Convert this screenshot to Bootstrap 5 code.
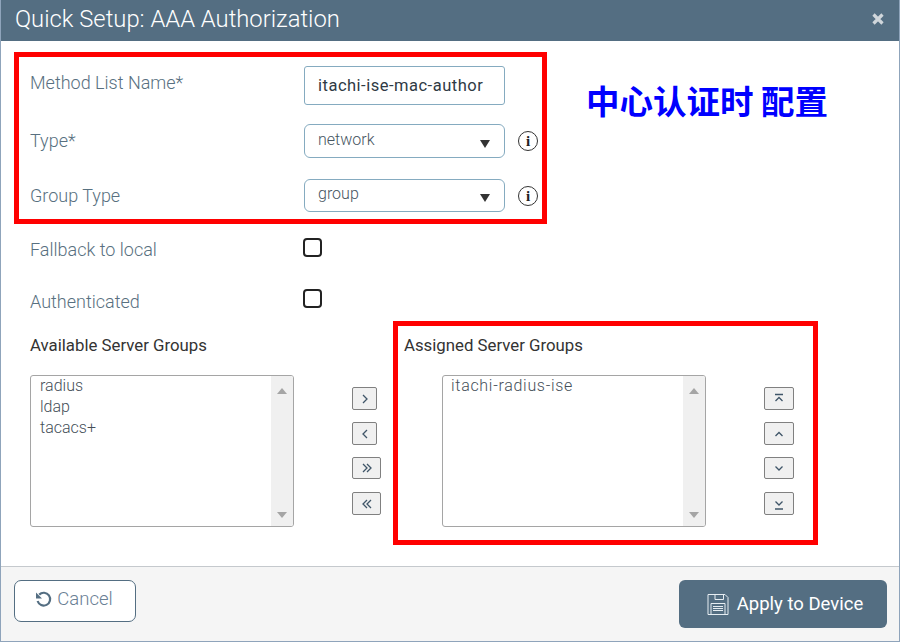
<!DOCTYPE html>
<html lang="en">
<head>
    <meta charset="UTF-8">
    <meta name="viewport" content="width=device-width, initial-scale=1.0">
    <title>Quick Setup: AAA Authorization</title>
    <link href="https://cdn.jsdelivr.net/npm/bootstrap@5.3.0/dist/css/bootstrap.min.css" rel="stylesheet">
    <style>
        html, body { height: 642px; overflow: hidden; }
        body { font-family: Roboto, "Liberation Sans", sans-serif; font-weight: 300; background: #fff; }

        .dlg { height: 642px; border: 1px solid #8fa4bb; border-top: 0; border-radius: 0; }
        .dlg-head { height: 41px; padding: 0 15px 0 14px; background: #546e82; color: #fff; border: 0; border-radius: 0 !important; font-size: 23.8px; line-height: 38px; }
        .dlg-close { margin-top: 13px; }
        .dlg-body { padding: 0; height: 525px; flex: none; }
        .dlg-foot { height: 75px; padding: 13px 12px 0 13px; background: #f5f5f5; border-top: 1px solid #c5c9cd; border-radius: 0 !important; }

        .red-box { border: 5px solid #f00; }
        .box-top { width: 533px; height: 172px; margin: 11px 0 0 13px; padding: 9px 0 0 11px; }
        .box-assigned { width: 425px; height: 224px; padding: 7px 0 0 6px; }

        .cn-note { margin: 37px 0 0 39px; color: #00f; font-family: "Noto Sans CJK SC", sans-serif; font-weight: 700; font-size: 33.5px; line-height: 44px; white-space: nowrap; }

        .field-label { width: 274px; font-size: 18px; color: #587080; flex: none; }
        .label-up { padding-bottom: 6px; }
        .label-up-sm { padding-bottom: 1px; }
        .field-wrap { width: 201px; flex: none; }
        .txt-input { height: 39px; padding: 0 13px; border: 1px solid #85abc0; border-radius: 3px; font-size: 16.5px; letter-spacing: .5px; font-weight: 400; color: #2f3a44; }
        .sel-input { width: 201px; height: 100%; padding: 0 13px 3px; background-image: none; border: 1px solid #85abc0; border-radius: 6px; font-size: 16px; font-weight: 300; color: #46555f; }
        .sel-caret { position: absolute; right: 15px; bottom: 10px; width: 0; height: 0; border-left: 5px solid transparent; border-right: 5px solid transparent; border-top: 8px solid #333; }
        .info-dot { width: 20px; height: 20px; margin-left: 13px; border: 1px solid #333; border-radius: 50%; font: 700 15px/18px "Liberation Serif", serif; color: #222; text-align: center; }

        .row-two { height: 34px; margin-top: 19px; }
        .row-three { height: 33px; margin-top: 21px; }
        .row-check { height: 19px; margin-left: 29px; }
        .mt-chk1 { margin-top: 14px; }
        .mt-chk2 { margin-top: 32px; }

        .chk { width: 19px; height: 19px; margin: 0; border: 2px solid #222; border-radius: 4px; flex: none; }
        .chk-label { width: 273px; position: relative; top: 2px; }
        .chk-label-low { top: 3px; }

        .groups-row { margin-top: 13px; }
        .avail-col { margin: 12px 0 0 29px; }
        .group-title { height: 24px; margin-bottom: 18px; font-size: 16.8px; line-height: 24px; font-weight: 400; color: #333; white-space: nowrap; }
        .list-box { width: 264px; height: 152px; border: 1px solid #a5a5a5; border-radius: 3px; background: #fff; overflow: hidden; }
        .list-items { padding-left: 9px; font-size: 16px; line-height: 21px; color: #454f58; margin-top: -1px; }
        .dash-name { letter-spacing: .7px; margin-left: -1px; }
        .assigned-list { margin-left: 38px; }
        .fake-scroll { width: 22px; background: #f0f0f0; padding: 12px 0 8px; }
        .tri-up, .tri-down { width: 0; height: 0; border-left: 5px solid transparent; border-right: 5px solid transparent; }
        .tri-up { border-bottom: 6px solid #a5a5a5; }
        .tri-down { border-top: 6px solid #a5a5a5; }

        .move-col { margin-top: 66px; }
        .mv-left { margin-left: 58px; margin-right: 12px; }
        .mv-right { margin-left: 58px; margin-top: 54px; }
        .mv-btn { height: 23px; padding: 0; display: flex; align-items: center; justify-content: center; background: #f0f0f0; border: 1px solid #808080; border-radius: 2px; margin-bottom: 12px; }
        .mv-btn:nth-child(3) { height: 22px; margin: 1px 0 13px; }
        .mv-btn svg { fill: none; stroke: #3f5568; stroke-width: 1.3; }
        .w-one { width: 25px; }
        .w-two { width: 29px; }
        .w-ord { width: 30px; }

        .btn-cancel { width: 122px; height: 42px; padding: 0 0 3px; border: 1px solid #546e82; border-radius: 7px; background: #fff; color: #6a8094; font-size: 18.5px; font-weight: 300; }
        .cancel-icon { margin-left: -2px; margin-right: 1px; margin-top: 0; }
        .btn-apply { width: 208px; height: 48px; padding: 0 0 0 4px; border: 0; border-radius: 6px; background: #546e82; color: #fff; font-size: 18.5px; font-weight: 400; }
        .apply-text { padding-top: 2px; }
    </style>
</head>
<body>
    <div class="card dlg">
        <div class="card-header dlg-head d-flex justify-content-between align-items-start">
            <span>Quick Setup: AAA Authorization</span>
            <svg width="12" height="12" viewBox="0 0 12 12" class="dlg-close"><path d="M1.500 1.500l9 9M10.500 1.500l-9 9" stroke="#d0d6db" stroke-width="3.200"/></svg>
        </div>

        <div class="card-body dlg-body">
            <div class="d-flex align-items-start">
                <div class="red-box box-top">
                    <div class="d-flex align-items-center">
                        <label class="field-label label-up">Method List Name*</label>
                        <input type="text" class="form-control field-wrap txt-input" value="itachi-ise-mac-author">
                    </div>
                    <div class="d-flex align-items-center row-two">
                        <label class="field-label label-up-sm">Type*</label>
                        <div class="position-relative field-wrap h-100">
                            <select class="form-select sel-input"><option>network</option></select>
                            <span class="sel-caret"></span>
                        </div>
                        <span class="info-dot">i</span>
                    </div>
                    <div class="d-flex align-items-center row-three">
                        <label class="field-label">Group Type</label>
                        <div class="position-relative field-wrap h-100">
                            <select class="form-select sel-input"><option>group</option></select>
                            <span class="sel-caret"></span>
                        </div>
                        <span class="info-dot">i</span>
                    </div>
                </div>
                <div class="cn-note">中心认证时 配置</div>
            </div>

            <div class="d-flex align-items-center row-check mt-chk1">
                <label class="field-label chk-label">Fallback to local</label>
                <input type="checkbox" class="form-check-input chk">
            </div>
            <div class="d-flex align-items-center row-check mt-chk2">
                <label class="field-label chk-label chk-label-low">Authenticated</label>
                <input type="checkbox" class="form-check-input chk">
            </div>

            <div class="d-flex align-items-start groups-row">
                <div class="avail-col">
                    <div class="group-title">Available Server Groups</div>
                    <div class="list-box d-flex">
                        <div class="list-items flex-grow-1">
                            <div>radius</div>
                            <div>ldap</div>
                            <div>tacacs+</div>
                        </div>
                        <div class="fake-scroll d-flex flex-column justify-content-between align-items-center">
                            <span class="tri-up"></span>
                            <span class="tri-down"></span>
                        </div>
                    </div>
                </div>

                <div class="move-col mv-left">
                    <button class="btn mv-btn w-one"><svg width="10" height="12" viewBox="0 0 10 12"><path d="M3 2l4 4-4 4"/></svg></button>
                    <button class="btn mv-btn w-one"><svg width="10" height="12" viewBox="0 0 10 12"><path d="M7 2L3 6l4 4"/></svg></button>
                    <button class="btn mv-btn w-two"><svg width="14" height="12" viewBox="0 0 14 12"><path d="M3 2l4 4-4 4M7 2l4 4-4 4"/></svg></button>
                    <button class="btn mv-btn w-two"><svg width="14" height="12" viewBox="0 0 14 12"><path d="M7 2L3 6l4 4M11 2L7 6l4 4"/></svg></button>
                </div>

                <div class="red-box box-assigned d-flex align-items-start">
                    <div>
                        <div class="group-title">Assigned Server Groups</div>
                        <div class="list-box d-flex assigned-list">
                            <div class="list-items flex-grow-1">
                                <div class="dash-name">itachi-radius-ise</div>
                            </div>
                            <div class="fake-scroll d-flex flex-column justify-content-between align-items-center">
                                <span class="tri-up"></span>
                                <span class="tri-down"></span>
                            </div>
                        </div>
                    </div>
                    <div class="move-col mv-right">
                        <button class="btn mv-btn w-ord"><svg width="14" height="14" viewBox="0 0 14 14"><path d="M3 2.500h8M3.500 9l3.500-3.500L10.500 9"/></svg></button>
                        <button class="btn mv-btn w-ord"><svg width="14" height="12" viewBox="0 0 14 12"><path d="M3.500 8L7 4.500 10.500 8"/></svg></button>
                        <button class="btn mv-btn w-ord"><svg width="14" height="12" viewBox="0 0 14 12"><path d="M3.500 4.500L7 8l3.500-3.500"/></svg></button>
                        <button class="btn mv-btn w-ord"><svg width="14" height="14" viewBox="0 0 14 14"><path d="M3.500 4.500L7 8l3.500-3.500M3 12h8"/></svg></button>
                    </div>
                </div>
            </div>
        </div>

        <div class="card-footer dlg-foot d-flex justify-content-between align-items-start">
            <button class="btn btn-cancel d-flex align-items-center justify-content-center gap-1">
                <svg class="cancel-icon" width="17" height="17" viewBox="0 0 17 17" fill="none"><path d="M4.200 3.600A6.400 6.400 0 1 1 2.600 10" stroke="#546e82" stroke-width="2.200"/><path d="M1 1.500v6h6z" fill="#546e82"/></svg>
                <span>Cancel</span>
            </button>
            <button class="btn btn-apply d-flex align-items-center justify-content-center gap-2">
                <svg width="22" height="23" viewBox="0 0 22 23" fill="none" stroke="#e6edf2" stroke-width="1"><path d="M1 1.500h17l3 3v17H1z"/><path d="M8 1.500v5h8.500v-5M4 21.500V10.500h14v11"/><path d="M6 13.500h10M6 15.500h10M6 17.500h10"/></svg>
                <span class="apply-text">Apply to Device</span>
            </button>
        </div>
    </div>
</body>
</html>
